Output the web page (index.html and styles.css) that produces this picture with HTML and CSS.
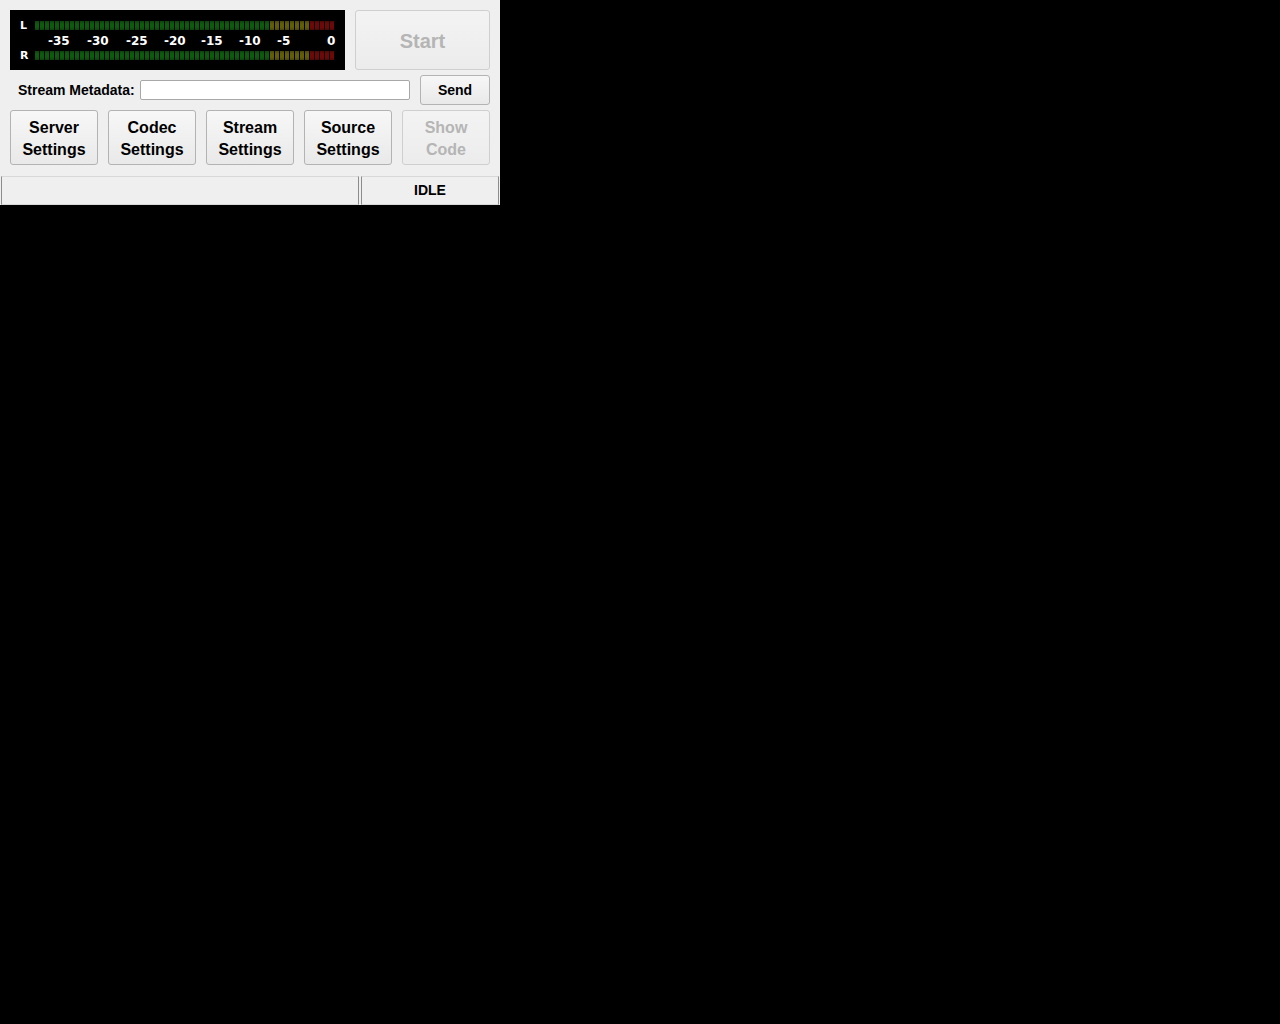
FILE: index.html
```html
<!DOCTYPE html>
<html>
<head>
<meta charset="utf-8">
<title>Stream</title>
<link rel="stylesheet" href="styles.css">
</head>
<body>
<div class="window">
  <div class="row-top">
    <div class="meter">
      <div class="chan">
        <span class="chan-label">L</span>
        <div class="bar"></div>
      </div>
      <div class="scale">
        <span class="tick" style="left:48px">-35</span>
        <span class="tick" style="left:87px">-30</span>
        <span class="tick" style="left:126px">-25</span>
        <span class="tick" style="left:164px">-20</span>
        <span class="tick" style="left:201px">-15</span>
        <span class="tick" style="left:239px">-10</span>
        <span class="tick" style="left:277px">-5</span>
        <span class="tick" style="left:327px">0</span>
      </div>
      <div class="chan">
        <span class="chan-label">R</span>
        <div class="bar"></div>
      </div>
    </div>
    <button class="btn btn-start" disabled>Start</button>
  </div>
  <div class="row-meta">
    <label class="meta-label">Stream Metadata:</label>
    <input class="meta-input" type="text">
    <button class="btn btn-send">Send</button>
  </div>
  <div class="row-buttons">
    <button class="btn btn-big">Server<br>Settings</button>
    <button class="btn btn-big">Codec<br>Settings</button>
    <button class="btn btn-big">Stream<br>Settings</button>
    <button class="btn btn-big">Source<br>Settings</button>
    <button class="btn btn-big" disabled>Show<br>Code</button>
  </div>
  <div class="statusbar">
    <div class="panel panel-main"></div>
    <div class="panel panel-state">IDLE</div>
  </div>
</div>
</body>
</html>
```

FILE: styles.css
```css
html, body {
  margin: 0;
  padding: 0;
  background: #000;
}

.window {
  width: 500px;
  height: 205px;
  background: #efefef;
  font-family: "Liberation Sans", Arial, sans-serif;
  color: #000;
  box-sizing: border-box;
  display: flex;
  flex-direction: column;
}

.row-top {
  display: flex;
  gap: 10px;
  padding: 10px 10px 0 10px;
  height: 70px;
  box-sizing: border-box;
}

.meter {
  width: 335px;
  height: 60px;
  background: #000;
  position: relative;
  box-sizing: border-box;
  padding-top: 11px;
  font-family: "DejaVu Sans", sans-serif;
  font-weight: bold;
  color: #fff;
}

.chan {
  display: flex;
  align-items: center;
  height: 9px;
}

.chan-label {
  width: 25px;
  padding-left: 10px;
  box-sizing: border-box;
  font-size: 11px;
  line-height: 9px;
}

.bar {
  width: 300px;
  height: 9px;
  background:
    repeating-linear-gradient(to right, transparent 0 4px, #000 4px 5px),
    linear-gradient(to bottom, rgba(0,0,0,0.25), rgba(0,0,0,0) 30%, rgba(0,0,0,0) 70%, rgba(0,0,0,0.25)),
    linear-gradient(to right, #0e5a0e 0 234px, #625d0a 234px 275px, #6e0909 275px 300px);
}

.scale {
  position: relative;
  height: 21px;
}

.tick {
  position: absolute;
  top: 5px;
  font-size: 12px;
  line-height: 13px;
  margin-left: -10px;
}

.btn {
  font-family: "Liberation Sans", Arial, sans-serif;
  font-weight: bold;
  color: #000;
  background: linear-gradient(to bottom, #f7f7f7, #e9e9e9);
  border: 1px solid #b3b3b3;
  border-radius: 3px;
  padding: 0;
  margin: 0;
  box-sizing: border-box;
}

.btn:disabled {
  color: #b5b5b5;
  border-color: #cfcfcf;
  background: linear-gradient(to bottom, #f3f3f3, #ececec);
}

.btn-start {
  width: 135px;
  height: 60px;
  font-size: 20px;
  padding-top: 2px;
}

.row-meta {
  display: flex;
  align-items: center;
  margin-top: 5px;
  height: 30px;
  padding-left: 18px;
}

.meta-label {
  font-size: 14px;
  font-weight: bold;
  width: 122px;
}

.meta-input {
  width: 270px;
  height: 20px;
  box-sizing: border-box;
  border: 1px solid #a8a8a8;
  border-radius: 2px;
  background: #fff;
  margin: 0;
  padding: 0 3px;
  font-family: "Liberation Sans", Arial, sans-serif;
  font-size: 13px;
}

.btn-send {
  width: 70px;
  height: 30px;
  font-size: 14px;
  margin-left: 10px;
}

.row-buttons {
  display: flex;
  gap: 10px;
  margin-top: 5px;
  padding-left: 10px;
}

.btn-big {
  width: 88px;
  height: 55px;
  font-size: 16px;
  line-height: 22px;
  padding-top: 2px;
}

.statusbar {
  display: flex;
  gap: 2px;
  margin-top: 11px;
  padding-left: 1px;
  height: 29px;
}

.panel {
  height: 29px;
  box-sizing: border-box;
  border-top: 1px solid #d8d8d8;
  border-left: 1px solid #8c8c8c;
  border-right: 1px solid #8c8c8c;
  border-bottom: 1px solid #d8d8d8;
  padding-bottom: 2px;
  font-size: 14px;
  font-weight: bold;
  display: flex;
  align-items: center;
  justify-content: center;
}

.panel-main {
  width: 358px;
}

.panel-state {
  width: 138px;
}
```
